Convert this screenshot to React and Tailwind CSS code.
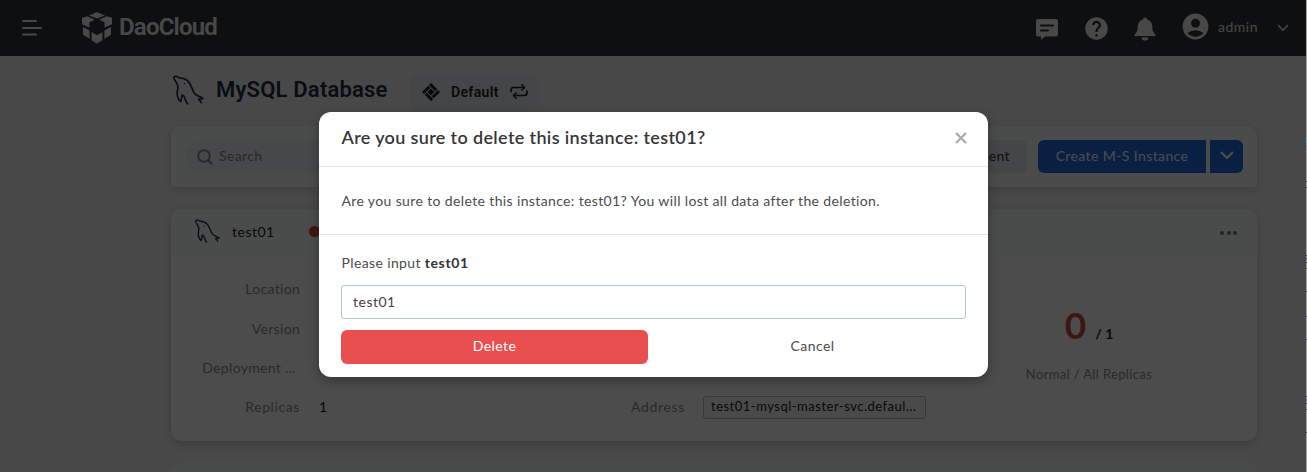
import React from "react";
import { MdHelp, MdAccountCircle } from "react-icons/md";

function Dolphin({ className }) {
  return (
    <svg viewBox="0 0 32 31" className={className} fill="none" stroke="currentColor" strokeWidth="1.7" strokeLinejoin="round" strokeLinecap="round">
      <path d="M15.500 28.800C13.800 27.200 13.200 24.600 12 21.200L10.200 19.800C9.400 22 9.800 25.200 8.600 26.600C6 24.400 5 21.400 5.200 18C5.400 15.500 6.200 13.200 5.800 11C5.400 8.400 3.600 6.400 2.400 4.400C1.400 2.600 1.600 1.600 3 1.400C4.600 1.200 6 1.600 7.400 2.800C11 3 14.400 4.200 16.400 6.600C18.600 9.300 20.200 13.500 21.600 17C22.600 19.400 24.600 20.400 27 21.400C28.800 22.200 30.200 22.600 31 23.600C29.600 23.600 28 23.800 26.600 24.400C27.600 25.400 28.600 26.200 29.200 27.600" />
      <circle cx="12.4" cy="8.6" r="0.8" fill="currentColor" stroke="none" />
    </svg>
  );
}

function Logo() {
  return (
    <svg viewBox="0 0 30 32" className="h-8 w-[30px] shrink-0" fill="currentColor">
      <path d="M15 0L23 3.400L15 6.500L7 3.400Z" />
      <path d="M0 5.800L5.300 4.300L12.800 7.800L7.400 10.300V15.600L0 12.300Z" />
      <path d="M30 5.800L24.700 4.300L17.200 7.800L22.600 10.300V15.600L30 12.300Z" />
      <path d="M1 15L7.600 18.600V26.800L1 22.800Z" />
      <path d="M29 15L22.400 18.600V26.800L29 22.800Z" />
      <path d="M9.600 20L15 23.200L20.400 20V28.300L15 31.700L9.600 28.300Z" />
    </svg>
  );
}

function Header() {
  return (
    <header className="flex h-14 items-center bg-[#2f3239] pl-[22px] pr-[17px] text-[#f0f0f0]">
      <svg viewBox="0 0 20 16" className="h-4 w-5" stroke="currentColor" strokeWidth="2" strokeLinecap="round">
        <path d="M1 1H14M1 8H19M1 14.500H14" />
      </svg>
      <div className="ml-10 flex items-center">
        <Logo />
        <span className="-mt-0.5 ml-[7px] font-['Roboto',sans-serif] text-[24px] leading-6 font-semibold tracking-[-0.82px]">DaoCloud</span>
      </div>
      <div className="ml-auto flex items-center">
        <svg viewBox="0 0 22 22" className="mt-[3px] h-[22px] w-[22px]">
          <path fill="currentColor" d="M2 0H20Q22 0 22 2V15.500Q22 17.500 20 17.500H9L5 21V17.500H2Q0 17.500 0 15.500V2Q0 0 2 0Z" />
          <path stroke="#2f3239" strokeWidth="2" strokeLinecap="round" d="M5 6.500H17M5 11.500H12" />
        </svg>
        <MdHelp className="ml-[25px] size-[27px]" />
        <svg viewBox="0 0 22 24" className="mt-px ml-6 h-6 w-[22px]" fill="currentColor">
          <path d="M11 0.500C12.200 0.500 13 1.300 13 2.400C16.500 3.300 18.300 6 18.300 9.500C18.300 13.500 19 15.500 21.400 17.500V19H0.600V17.500C3 15.500 3.700 13.500 3.700 9.500C3.700 6 5.500 3.300 9 2.400C9 1.300 9.800 0.500 11 0.500Z" />
          <path d="M7.500 20.400H14.500C14.200 22.500 12.800 23.600 11 23.600S7.800 22.500 7.500 20.400Z" />
        </svg>
        <MdAccountCircle className="ml-6 -mt-1 size-[31px]" />
        <span className="-mt-0.5 ml-[7px] text-sm tracking-[0.5px]">admin</span>
        <svg viewBox="0 0 12 8" className="ml-[19px] h-2 w-3" fill="none" stroke="currentColor" strokeWidth="1.600" strokeLinecap="round" strokeLinejoin="round">
          <path d="M1.500 1.500L6 6.200L10.500 1.500" />
        </svg>
      </div>
    </header>
  );
}

function TitleRow() {
  return (
    <div className="flex h-[36px] items-center">
      <Dolphin className="mb-[3px] ml-px h-[31px] w-8 text-[#1c2f44]" />
      <h1 className="mb-[5px] ml-3 w-[172px] whitespace-nowrap font-['Roboto',sans-serif] text-[22px] font-semibold tracking-[0.2px] text-[#1c2f44]">MySQL Database</h1>
      <div className="ml-[22px] flex h-9 w-[129px] items-center rounded-lg bg-[#e6e9ef] pl-3 text-[#202225]">
        <svg viewBox="0 0 18 18" className="mb-px size-[18px]" fill="currentColor">
          <g transform="rotate(45 9 9)">
            <path d="M2.600 2.600H11.500V5.600H2.600ZM12.400 2.600H15.400V11.500H12.400ZM6.500 12.400H15.400V15.400H6.500ZM2.600 6.500H5.600V15.400H2.600Z" />
            <path d="M6.500 6.500H11.500V11.500H6.500Z" />
          </g>
        </svg>
        <span className="ml-[11px] font-['Roboto',sans-serif] text-sm font-semibold tracking-[0.35px]">Default</span>
        <svg viewBox="0 0 18 16" className="ml-[11px] h-4 w-[18px]" fill="none" stroke="currentColor" strokeWidth="1.700" strokeLinecap="round" strokeLinejoin="round">
          <path d="M1 7.500V6.500Q1 3.500 3.500 3.500H14M12 1L14.500 3.500L12 6M17 7V8.500Q17 11.500 14.500 11.500H4M6 9L3.500 11.500L6 14" />
        </svg>
      </div>
    </div>
  );
}

function Toolbar() {
  return (
    <div className="mt-4 flex h-[61px] items-center rounded-t-[10px] bg-[#f8fffb] pr-3.5 pl-3.5 shadow-[0_2px_8px_rgba(40,60,60,0.2)]">
      <div className="flex h-[33px] w-[300px] items-center rounded-full bg-[#eef1f6] pl-3 text-[#858688]">
        <svg viewBox="0 0 16 16" className="size-4" fill="none" stroke="currentColor" strokeWidth="2" strokeLinecap="round">
          <circle cx="7" cy="7" r="5.800" />
          <path d="M11.500 11.500L14.700 14.700" />
        </svg>
        <span className="ml-[6px] pb-px text-sm tracking-[0.36px]">Search</span>
      </div>
      <div className="ml-auto flex">
        <button className="mr-[11px] h-[33px] rounded-md bg-[#e8eaed] pr-[17px] pb-0.5 pl-5 text-sm tracking-[0.36px] text-[#333]">Management</button>
        <button className="mr-1 h-[33px] w-[168px] rounded-l-md bg-[#226bdf] pb-0.5 text-sm tracking-[0.4px] text-white">Create M-S Instance</button>
        <button className="flex h-[33px] w-[33px] items-center justify-center rounded-r-md bg-[#226bdf] text-white">
          <svg viewBox="0 0 14 10" className="mb-1 h-2.5 w-3.5" fill="none" stroke="currentColor" strokeWidth="2.200">
            <path d="M1 2L7 8L13 2" />
          </svg>
        </button>
      </div>
    </div>
  );
}

function Label({ children, className = "" }) {
  return <span className={`whitespace-nowrap text-right text-sm text-[#8e8e8e] ${className}`}>{children}</span>;
}

function InstanceCard() {
  return (
    <div className="mt-[22px] h-[232px] overflow-hidden rounded-[10px] bg-white shadow-[0_3px_10px_rgba(40,60,60,0.22)]">
      <div className="flex h-[47px] items-center bg-[#f8fefc] pl-[23px]">
        <Dolphin className="mb-[3px] h-[25px] w-[26px] text-[#1c2f44]" />
        <span className="ml-[12px] w-[42px] pb-0.5 text-sm tracking-[0.5px] text-[#222]">test01</span>
        <span className="mb-[3px] ml-[35px] size-[11px] rounded-full bg-[#e04545]" />
        <div className="mr-[20px] ml-auto flex gap-[2px] text-[#777]">
          <span className="size-1 rounded-full bg-current" />
          <span className="ml-px size-1 rounded-full bg-current" />
          <span className="size-1 rounded-full bg-current" />
        </div>
      </div>
      <div className="flex">
        <div className="flex w-[430px] flex-col pt-[13px]">
          {[
            ["Location", "Default", "mr-[19px] w-[129px] tracking-[0.3px]"],
            ["Version", "5.7", "mr-[19px] w-[129px] pt-0.5 tracking-[0.3px]"],
            ["Deployment ...", "Single", "mr-[23px] w-[125px] pt-px tracking-[0.33px]"],
            ["Replicas", "1", "mr-[19px] w-[129px] tracking-[0.6px]"],
          ].map(([name, value, style]) => (
            <div key={name} className="flex h-[39.300px] items-center">
              <Label className={style}>{name}</Label>
              <span className="text-sm text-[#111]">{value}</span>
            </div>
          ))}
        </div>
        <div className="flex w-[340px] items-end">
          <div className="flex h-[38px] items-center">
            <Label className="ml-[30px] w-[54px] tracking-[0.65px]">Address</Label>
            <span className="ml-[18px] flex h-[23px] w-[223px] items-center whitespace-nowrap rounded-[3px] border border-[#bcbcbc] bg-[#f7f7f7] pb-px pl-[7px] text-[13px] tracking-[0.5px] text-[#222]">test01-mysql-master-svc.defaul...</span>
          </div>
        </div>
        <div className="flex w-[296px] flex-col items-center">
          <div className="mt-[45px] flex items-baseline leading-[48px]">
            <span className="text-[37px] font-bold text-[#cf4a40]">0</span>
            <span className="ml-[9px] text-sm font-bold text-[#222]">/ 1</span>
          </div>
          <span className="mt-[16px] text-[13px] tracking-[0.36px] text-[#8e8e8e]">Normal / All Replicas</span>
        </div>
      </div>
    </div>
  );
}

function DeleteDialog() {
  return (
    <div className="absolute top-28 left-[319px] flex h-[265px] w-[669px] flex-col rounded-[12px] bg-white text-sm tracking-[0.37px] text-[#4c4c4c] shadow-[0_4px_12px_rgba(0,0,0,0.3)]">
      <div className="flex h-[55px] items-center justify-between border-b border-[#e2e2ec] pr-[21px] pb-0.5 pl-[22.500px]">
        <h2 className="text-[18px] font-semibold tracking-[0.35px] text-[#363636]">Are you sure to delete this instance: test01?</h2>
        <svg viewBox="0 0 12 12" className="size-3" stroke="#a9adba" strokeWidth="2.400">
          <path d="M1 1L11 11M11 1L1 11" />
        </svg>
      </div>
      <p className="flex h-[68px] items-center border-b border-[#e2e2ec] pl-[22.500px]">
        Are you sure to delete this instance: test01? You will lost all data after the deletion.
      </p>
      <div className="flex flex-col px-[22px] pt-[18px]">
        <label className="h-5 pl-[0.500px] leading-5">
          Please input <b className="tracking-[0.6px] text-[#333]">test01</b>
        </label>
        <input readOnly value="test01" className="mt-3 h-[34px] w-[625px] rounded-[3px] border border-[#b0c4da] pb-0.5 pl-[11px] tracking-[0.5px] text-[#444] outline-none" />
        <div className="mt-[11px] flex h-[34px]">
          <button className="w-[307px] rounded-md bg-[#e94f4f] pb-[3px] tracking-[0.45px] text-white">Delete</button>
          <button className="ml-[11px] w-[307px] pb-[3px] tracking-[0.45px]">Cancel</button>
        </div>
      </div>
    </div>
  );
}

const EDGE_MARKS = [
  "h-[6px] mt-[137px] bg-[#8fbccb]",
  "h-px mt-[3px] bg-[#6aa8c0]",
  "h-px mt-[34px] bg-[#444]",
  "h-px mt-[5px] bg-[#444]",
  "h-px mt-[67px] bg-[#444]",
  "h-[2px] mt-[2px] bg-[#5b6f96]",
  "h-px mt-[2px] bg-[#444]",
  "h-px mt-[5px] bg-[#555]",
  "h-px mt-[22px] bg-[#444]",
  "h-px mt-[24px] bg-[#35578c]",
  "h-px mt-[22px] bg-[#35578c]",
  "h-px mt-[56px] bg-[#444]",
  "h-[2px] mt-[2px] bg-[#5b6f96]",
  "h-px mt-[2px] bg-[#444]",
  "h-px mt-[5px] bg-[#444]",
  "h-px mt-[22px] bg-[#444]",
];

export default function App() {
  return (
    <div className="relative flex h-[472px] w-[1307px] overflow-hidden font-['Lato',sans-serif]">
      <div className="w-[1306px] bg-[#f2f2f2]">
        <Header />
        <main className="ml-[171px] w-[1086px] pt-[18px]">
          <TitleRow />
          <Toolbar />
          <InstanceCard />
          <div className="mt-[22px] h-12 rounded-t-[10px] bg-[#f8fefc]" />
        </main>
      </div>
      <div className="flex w-px flex-col bg-[#a6a6a6]">
        {EDGE_MARKS.map((mark, i) => (
          <span key={i} className={`w-px shrink-0 ${mark}`} />
        ))}
      </div>
      <div className="absolute inset-y-0 left-0 w-[1306px] bg-black/70" />
      <DeleteDialog />
    </div>
  );
}
